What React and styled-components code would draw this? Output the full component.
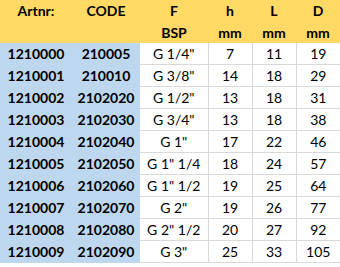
import styled, { createGlobalStyle } from 'styled-components';

const GlobalStyle = createGlobalStyle`
    html, body {
        margin: 0;
        padding: 0;
        background: #FFFFFF;
    }

    body {
        font-family: Lato, "Open Sans", "Liberation Sans", sans-serif;
        color: #000000;
    }
`;

const rows = [
    ['1210000', '210005', 'G 1/4"', 7, 11, 19],
    ['1210001', '210010', 'G 3/8"', 14, 18, 29],
    ['1210002', '2102020', 'G 1/2"', 13, 18, 31],
    ['1210003', '2102030', 'G 3/4"', 13, 18, 38],
    ['1210004', '2102040', 'G 1"', 17, 22, 46],
    ['1210005', '2102050', 'G 1" 1/4', 18, 24, 57],
    ['1210006', '2102060', 'G 1" 1/2', 19, 25, 64],
    ['1210007', '2102070', 'G 2"', 19, 26, 77],
    ['1210008', '2102080', 'G 2" 1/2', 20, 27, 92],
    ['1210009', '2102090', 'G 3"', 25, 33, 105],
];

const widths = [72, 68, 68, 44, 44, 44];

const Sheet = styled.table`
    border-collapse: collapse;
    table-layout: fixed;
    width: 340px;
    font-size: 14px;
`;

const HeadCell = styled.th`
    background: #FFD966;
    font-weight: 700;
    text-align: center;
    padding: 0;
    height: ${({ $h }) => $h}px;
    vertical-align: middle;
    line-height: 1;
`;

const Cell = styled.td`
    background: ${({ $key }) => ($key ? '#BDD7EE' : '#FFFFFF')};
    font-weight: ${({ $key }) => ($key ? 700 : 400)};
    text-align: center;
    padding: 0;
    height: 21px;
    line-height: 1;
    border-bottom: ${({ $key }) => ($key ? 'none' : '1px solid #D9D9D9')};
    border-left: ${({ $grid }) => ($grid ? '1px solid #D9D9D9' : 'none')};
`;

const App = () => {
    return (
        <>
            <GlobalStyle />
            <Sheet>
                <colgroup>
                    {widths.map((w, i) => <col key={i} style={{ width: w }} />)}
                </colgroup>
                <thead>
                    <tr>
                        {['Artnr:', 'CODE', 'F', 'h', 'L', 'D'].map((t) => (
                            <HeadCell key={t} $h={22}>{t}</HeadCell>
                        ))}
                    </tr>
                    <tr>
                        {['', '', 'BSP', 'mm', 'mm', 'mm'].map((t, i) => (
                            <HeadCell key={i} $h={21}>{t}</HeadCell>
                        ))}
                    </tr>
                </thead>
                <tbody>
                    {rows.map((r) => (
                        <tr key={r[0]}>
                            {r.map((v, i) => (
                                <Cell key={i} $key={i < 2} $grid={i > 2}>{v}</Cell>
                            ))}
                        </tr>
                    ))}
                </tbody>
            </Sheet>
        </>
    )
}

export default App
